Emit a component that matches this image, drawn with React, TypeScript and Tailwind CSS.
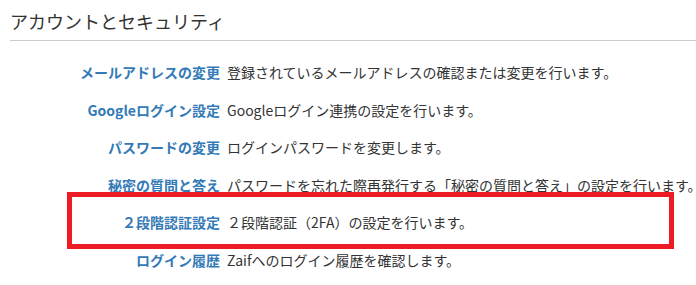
const rows: [string, string][] = [
  ["メールアドレスの変更", "登録されているメールアドレスの確認または変更を行います。"],
  ["Googleログイン設定", "Googleログイン連携の設定を行います。"],
  ["パスワードの変更", "ログインパスワードを変更します。"],
  ["秘密の質問と答え", "パスワードを忘れた際再発行する「秘密の質問と答え」の設定を行います。"],
  ["２段階認証設定", "２段階認証（2FA）の設定を行います。"],
  ["ログイン履歴", "Zaifへのログイン履歴を確認します。"],
];

export default function App() {
  return (
    <div
      className="relative w-[696px] h-[285px] overflow-hidden bg-white text-[#333]"
      style={{ fontFamily: '"Noto Sans CJK JP", "Noto Sans", sans-serif' }}
    >
      <div className="ml-[10px] pt-[8px] border-b border-[#ccc] h-[41px]">
        <h2 className="text-[18px] leading-[26px] font-normal">アカウントとセキュリティ</h2>
      </div>
      <div className="pt-[13px]">
        {rows.map(([label, desc]) => (
          <div key={label} className="flex items-center h-[37.5px] text-[14px] whitespace-nowrap">
            <div className="w-[220px] shrink-0 text-right font-bold text-[#337ab7]">{label}</div>
            <div className="pl-[7px]">{desc}</div>
          </div>
        ))}
      </div>
      <div className="absolute left-[67px] top-[192px] w-[607px] h-[57px] border-[5px] border-[#ed1c24]" />
    </div>
  );
}
